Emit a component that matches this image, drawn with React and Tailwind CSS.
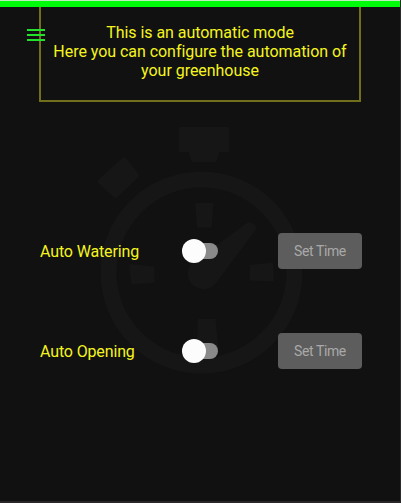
import React from 'react';

function Stopwatch() {
  return (
    <svg className="pointer-events-none absolute inset-0 h-full w-full" viewBox="0 0 401 503" fill="#161616">
      <path d="M181 127h47q1 0 1 1v23q0 1-1 1h-8q-2 1-3 8q0 2-2 2h-22q-2 0-2-2q-1-7-3-8h-8q-1 0-1-1v-23q0-1 1-1z" />
      <path d="M122.500 158q2-1.500 3.500 0l12.500 16q1 2 0 3l-21 20q-2 2-4 0l-15-14q-1.500-2 0-3.500z" />
      <circle cx="201.500" cy="272.500" r="93" fill="none" stroke="#161616" strokeWidth="16" />
      <path d="M195 203h18.500l-2 24.500h-14.500z" />
      <path d="M198 319h17.500l3 30h-22z" />
      <path d="M129.500 264l25 2.500v16l-23 2q-2-10-2-20.500z" />
      <path d="M250 265l23-2.500 1 19-24 -1z" />
      <path d="M191 264L247 223Q250 221 252 223L255.500 226Q257 228 255.500 230L216 283A15 15 0 1 1 191 264z" />
    </svg>
  );
}

function Row({ label }) {
  return (
    <div className="flex h-9 items-center pl-10">
      <span className="w-[142px] pt-px text-[16px] leading-5 tracking-[-0.14px] text-[#f5f51e]">{label}</span>
      <button role="switch" aria-checked="false" aria-label={label} className="flex h-6 w-9 items-center">
        <span className="z-10 h-6 w-6 shrink-0 rounded-full bg-[#fcfcfc]" />
        <span className="-ml-3 h-4 w-6 shrink-0 rounded-full bg-[#8a8a8a]" />
      </button>
      <button className="ml-[60px] h-9 w-[84px] rounded-[4px] bg-[#5d5d5d] text-[14px] tracking-[-0.4px] text-[#a9a9a9]">
        Set Time
      </button>
    </div>
  );
}

export default function App() {
  return (
    <div className="relative isolate flex h-[503px] w-[401px] flex-col overflow-hidden border-r border-b-2 border-r-[#2b2b2b] border-b-[#292627] bg-[#111111] font-[Roboto,sans-serif]">
      <div className="absolute inset-0 -z-20 h-[503px] w-[401px]">
        <Stopwatch />
      </div>
      <header className="h-[7px] shrink-0 border-t border-[#bdedc0] bg-[#00fc08]" />
      <div className="mx-auto h-[95px] w-[322px] shrink-0 border-2 border-t-0 border-[#716f1b] pt-4 text-center text-[16px] leading-[19px] tracking-[-0.04px] text-[#f5f51e]">
        <p>This is an automatic mode</p>
        <p>Here you can configure the automation of</p>
        <p>your greenhouse</p>
      </div>
      <button aria-label="Menu" className="absolute left-[27px] top-[29px] flex w-[18px] flex-col gap-[3px]">
        <span className="h-[2px] w-full bg-[#22e02c]" />
        <span className="h-[2px] w-full bg-[#22e02c]" />
        <span className="h-[2px] w-full bg-[#22e02c]" />
      </button>
      <main className="mt-[131px] flex flex-col gap-16">
        <Row label="Auto Watering" />
        <Row label="Auto Opening" />
      </main>
    </div>
  );
}
